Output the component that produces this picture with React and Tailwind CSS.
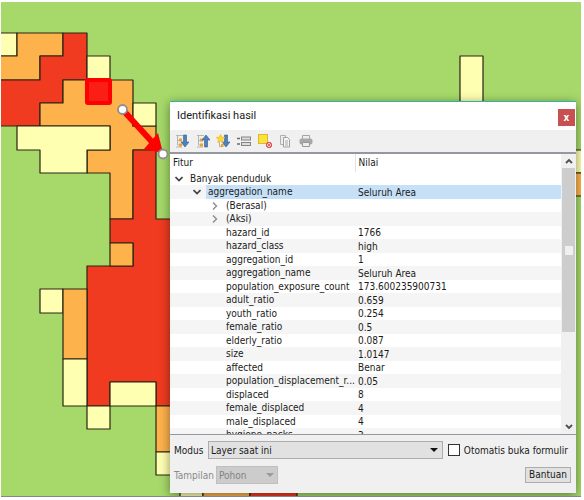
import React from "react";

const Y = "#ffffb2";
const O = "#fdb24c";
const R = "#f03b20";

const zones = [
  [Y, "-6,33 17,33 17,56 -6,56"],
  [O, "17,33 63,33 63,56 40,56 40,80 -6,80 -6,56 17,56"],
  [R, "63,33 87,33 87,80 63,80 63,103 40,103 40,126 -6,126 -6,80 40,80 40,56 63,56"],
  [Y, "87,56 110,56 110,80 87,80"],
  [O, "63,80 133,80 133,126 156,126 156,150 133,150 133,219 110,219 110,173 87,173 87,150 110,150 110,126 40,126 40,103 63,103"],
  [Y, "133,103 156,103 156,126 133,126"],
  [Y, "17,126 110,126 110,150 87,150 87,173 40,173 40,150 17,150"],
  [R, "133,150 156,150 156,219 200,219 200,406 156,406 156,382 110,382 110,406 87,406 87,266 110,266 133,266 133,243 110,243 110,219 133,219"],
  [O, "110,243 133,243 133,266 110,266"],
  [Y, "40,289 63,289 63,313 40,313"],
  [O, "63,289 87,289 87,359 63,359"],
  [Y, "63,359 87,359 87,406 63,406"],
  [Y, "110,382 156,382 156,406 110,406"],
  [Y, "87,406 110,406 110,429 87,429"],
  [O, "156,406 203,406 203,452 156,452"],
  [Y, "156,452 203,452 203,475 156,475"],
  [Y, "180,475 203,475 203,510 180,510"],
  [O, "203,475 250,475 250,510 203,510"],
  [R, "250,475 297,475 297,510 250,510"],
  [Y, "460,56 483,56 483,150 460,150"],
  [Y, "553,150 600,150 600,173 553,173"],
  [O, "553,173 600,173 600,196 553,196"],
];

const rows = [
  ["(Berasal)", "", true],
  ["(Aksi)", "", true],
  ["hazard_id", "1766"],
  ["hazard_class", "high"],
  ["aggregation_id", "1"],
  ["aggregation_name", "Seluruh Area"],
  ["population_exposure_count", "173.600235900731"],
  ["adult_ratio", "0.659"],
  ["youth_ratio", "0.254"],
  ["female_ratio", "0.5"],
  ["elderly_ratio", "0.087"],
  ["size", "1.0147"],
  ["affected", "Benar"],
  ["population_displacement_r...", "0.05"],
  ["displaced", "8"],
  ["female_displaced", "4"],
  ["male_displaced", "4"],
  ["hygiene_packs", "3"],
];

function HazardMap() {
  return (
    <svg className="absolute inset-0 h-full w-full" viewBox="1 2 580 494" preserveAspectRatio="xMinYMin slice" aria-hidden="true">
      <rect x="0" y="0" width="600" height="510" fill="#a6d96a" />
      {zones.map(([fill, points], i) => (
        <polygon key={i} points={points} fill={fill} stroke="#2a2412" strokeWidth="1.2" strokeLinejoin="round" />
      ))}
      <rect x="87" y="80" width="23" height="23" rx="1" fill="#fb1e14" stroke="#fe0000" strokeWidth="4" />
      <path d="M122 109 L153 143" stroke="#fe0000" strokeWidth="6" />
      <path d="M163 153 L144 149 L158 133 Z" fill="#fe0000" />
      <circle cx="122.500" cy="109.500" r="4.500" fill="#fff" stroke="#8f8f8f" strokeWidth="1.800" />
    </svg>
  );
}

function Chevron({ open }) {
  return (
    <svg className="h-2 w-2 shrink-0" viewBox="0 0 8 8" fill="none" stroke={open ? "#404040" : "#8c8c8c"} strokeWidth={open ? 1.7 : 1.4}>
      <path d={open ? "M0.500 2 L4 5.500 L7.500 2" : "M2 0.500 L5.500 4 L2 7.500"} />
    </svg>
  );
}

function Tree() {
  return (
    <g>
      <path d="M1 1.500h7M2.500 2v9M2.500 6.500h3M2.500 11h3M1 13h6" stroke="#b4b4b4" fill="none" />
      <path d="M4 4.500h3v3H4zM4 9.500h3v3H4z" fill="#f0a22e" />
    </g>
  );
}

function Arrow({ up }) {
  return (
    <path
      d={up ? "M8.500 13h3V6H14L10 1 6 6h2.500z" : "M8.500 1h3v7H14L10 13 6 8h2.500z"}
      fill="#4f80b6"
      stroke="#2f5f98"
      strokeWidth="0.6"
    />
  );
}

const tools = [
  ["Bentangkan pohon", <><Tree /><Arrow /></>],
  ["Ciutkan pohon", <><Tree /><Arrow up /></>],
  ["Bentangkan hasil baru", <><path d="M3.500 8v5M3.500 12.500h3" stroke="#b4b4b4" /><path d="M5 10h2.500v3H5z" fill="#f0a22e" /><Arrow /><path d="M4.500 0.500l1.400 2.600 3 .4-2.200 2.100.6 3-2.800-1.400-2.700 1.400.5-3L.2 3.500l3-.4z" fill="#fdd835" stroke="#eeb01e" strokeWidth=".6" /></>],
  ["Bersihkan hasil", <><path d="M0 4.500h3M0 10h3" stroke="#6b6b6b" strokeWidth="1.600" /><rect x="4.500" y="3" width="9" height="3" fill="#ddd" stroke="#858585" /><rect x="4.500" y="8.500" width="9" height="3" fill="#ddd" stroke="#858585" /></>],
  ["Kosongkan sorotan", <><rect x="0.500" y="0.500" width="9" height="9" fill="#fbe13c" stroke="#dcb92a" /><circle cx="11" cy="11" r="2.700" fill="#f6c9c9" stroke="#db4a4a" /><path d="M9 9l4 4M13 9l-4 4" stroke="#db4a4a" strokeWidth="0.8" /></>],
  ["Salin fitur", <><path d="M2.500 1.500h5v9h-5z" fill="#eee" stroke="#b0b0b0" /><path d="M5.500 3.500h4l2 2v7.500h-6z" fill="#f4f4f4" stroke="#a0a0a0" /><path d="M7 7h3M7 9h3M7 11h3" stroke="#aaa" /></>],
  ["Cetak respon", <><path d="M3.500 1.500h7v4h-7z" fill="#eee" stroke="#a5a5a5" /><rect x="0.500" y="4.500" width="13" height="6" rx="2" fill="#a8a8a8" /><path d="M3.500 8.500h7v4h-7z" fill="#ededed" stroke="#999" /></>],
];

function Row({ name, value, index, selected, level, arrow }) {
  const striped = index % 2 === 1;
  const indent = level === 0 ? "pl-[5px]" : level === 1 ? "pl-[23px]" : "pl-[41px]";
  return (
    <tr className={striped ? "h-[14px] bg-[#f5f5f5]" : "h-[13px] bg-white"}>
      <td className="overflow-hidden p-0">
        <div className={`flex items-center ${indent}`}>
          <span className="flex w-[13px] shrink-0">{arrow && <Chevron open={arrow === "open"} />}</span>
          <span className={`min-w-0 flex-1 truncate pl-[2px] ${striped ? "leading-[14px]" : "leading-[13px]"} ${selected ? "bg-[#c6e0f7]" : ""}`}>{name}</span>
        </div>
      </td>
      <td className={`p-0 pl-[3px] leading-[13px] ${selected ? "bg-[#c6e0f7]" : ""}`}>{value}</td>
    </tr>
  );
}

function Results() {
  return (
    <div className="flex h-[283px] border-t-2 border-b border-[#9598a0] bg-white">
      <div className="min-w-0 flex-1 overflow-hidden">
        <table className="w-full table-fixed border-collapse text-left">
          <thead>
            <tr className="h-[18px]">
              <th className="w-[185px] border-r border-[#e3e3e3] p-0 pl-[3px] leading-[18px] font-normal">Fitur</th>
              <th className="p-0 pl-[3px] leading-[18px] font-normal">Nilai</th>
            </tr>
          </thead>
          <tbody>
            <Row index={0} level={0} name="Banyak penduduk" arrow="open" />
            <Row index={1} level={1} name="aggregation_name" value="Seluruh Area" arrow="open" selected />
            {rows.map(([name, value, closed], i) => (
              <Row key={name} index={i + 2} level={2} name={name} value={value} arrow={closed ? "closed" : null} />
            ))}
          </tbody>
        </table>
      </div>
      <div className="flex w-[15px] flex-col items-center bg-[#f0f0f0]">
        <div className="flex h-[14px] items-center"><svg className="h-2 w-2" viewBox="0 0 8 8" fill="none" stroke="#505050" strokeWidth="1.800"><path d="M1 6l3-3 3 3" /></svg></div>
        <div className="flex h-[164px] w-[13px] items-center justify-center bg-[#cdcdcd]">
          <div className="h-[9px] w-[8px] bg-[#f0f0f0]" />
        </div>
        <div className="flex-1" />
        <div className="flex h-[14px] items-center"><svg className="h-2 w-2" viewBox="0 0 8 8" fill="none" stroke="#505050" strokeWidth="1.800"><path d="M1 2l3 3 3-3" /></svg></div>
      </div>
    </div>
  );
}

export default function App() {
  return (
    <div className="bg-white pt-[2px] pr-[3px] pb-[3px] pl-px font-['DejaVu_Sans_Condensed','DejaVu_Sans',sans-serif] text-[10px] text-[#1a1a1a]">
      <main className="relative overflow-hidden border-b border-[#7f8790] pt-[99px] pr-[5px] pb-[3px] pl-[169px]">
        <HazardMap />
        <section className="relative border-t border-[#2fb5a5] bg-[#f0f0f0] shadow-[0_2px_10px_rgba(0,0,0,0.45)]">
          <header className="flex h-[28px] items-center justify-between bg-white pl-[7px]">
            <h1 className="font-[Roboto,sans-serif] text-[11px]">Identifikasi hasil</h1>
            <button aria-label="Tutup" className="mt-[2px] mr-px flex h-[17px] w-[17px] items-center justify-center bg-[#c75050] font-bold text-white">x</button>
          </header>
          <div className="flex h-[22px] w-[143px] items-center justify-between pl-[5px]">
            {tools.map(([label, art]) => (
              <button key={label} aria-label={label} className="h-[14px] w-[14px]">
                <svg className="h-[14px] w-[14px]" viewBox="0 0 14 14">{art}</svg>
              </button>
            ))}
          </div>
          <Results />
          <div className="flex h-[58px] flex-col gap-[7px] px-1 pt-[6px]">
            <div className="flex items-center">
              <label htmlFor="mode" className="w-[34px]">Modus</label>
              <div className="relative flex-1">
                <select id="mode" className="block h-[18px] w-full appearance-none border border-[#adadad] bg-[#e1e1e1] pl-[2px]"><option>Layer saat ini</option></select>
                <svg className="pointer-events-none absolute top-[7px] right-[5px] h-1 w-2" viewBox="0 0 8 4"><path d="M0 0h8L4 4z" fill="#111" /></svg>
              </div>
              <label className="flex items-center gap-[4px] pr-[4px] pl-[5px]">
                <input type="checkbox" className="h-[12px] w-[12px] appearance-none border border-[#333] bg-white" />
                Otomatis buka formulir
              </label>
            </div>
            <div className="flex items-center">
              <label htmlFor="view" className="w-[42px] text-[#8a8a8a]">Tampilan</label>
              <div className="relative w-[62px]">
                <select id="view" disabled className="block h-[18px] w-full appearance-none border border-[#bfbfbf] bg-[#cccccc] pl-[2px] text-[#838383] opacity-100"><option>Pohon</option></select>
                <svg className="pointer-events-none absolute top-[7px] right-[4px] h-1 w-2" viewBox="0 0 8 4"><path d="M0 0h8L4 4z" fill="#9a9a9a" /></svg>
              </div>
              <button className="mr-px ml-auto h-[16px] w-[46px] border border-[#adadad] bg-[#e1e1e1] leading-[14px]">Bantuan</button>
            </div>
          </div>
        </section>
        <svg className="pointer-events-none absolute top-[146px] left-[156px] h-3 w-3" viewBox="0 0 12 12" aria-hidden="true">
          <circle cx="6" cy="6" r="4.500" fill="#fff" stroke="#8f8f8f" strokeWidth="1.800" />
        </svg>
      </main>
    </div>
  );
}
